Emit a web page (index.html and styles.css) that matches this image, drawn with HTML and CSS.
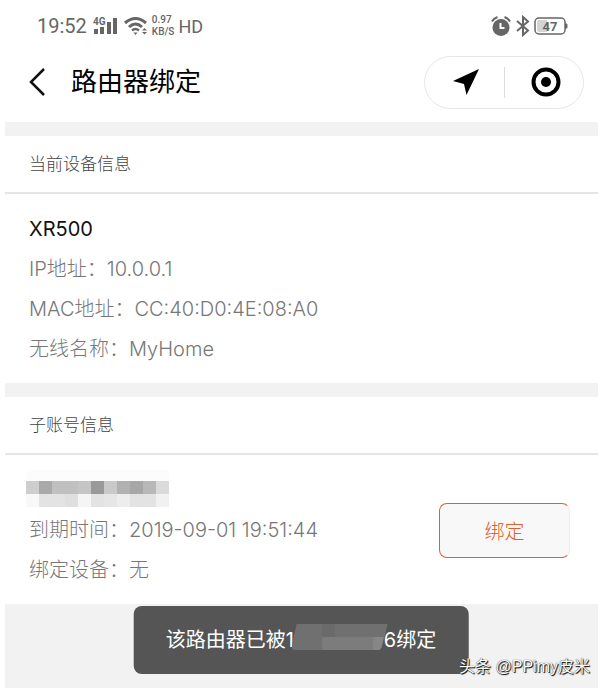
FILE: index.html
```html
<!DOCTYPE html>
<html lang="zh-CN">
<head>
  <meta charset="UTF-8" />
  <meta name="viewport" content="width=device-width, initial-scale=1.0" />
  <title>路由器绑定</title>
  <link rel="stylesheet" href="styles.css">
</head>
<body>
  <!-- 状态栏 -->
  <div class="status">
    <span class="time">19:52</span>
    <svg class="signal" width="25" height="20" viewBox="0 0 25 20" fill="#666">
      <text x="0" y="9" font-size="10" font-weight="700">4G</text>
      <rect x="1" y="13" width="4" height="5"/>
      <rect x="7" y="11" width="4" height="7"/>
      <rect x="14" y="6" width="4" height="12"/>
      <rect x="20" y="2" width="4" height="16"/>
    </svg>
    <svg class="wifi" width="24" height="20" viewBox="0 0 24 20" fill="none" stroke="#666" stroke-width="3">
      <path d="M1 7Q11.500 -2 22 7"/>
      <path d="M5 11Q11.500 5 18 11"/>
      <path d="M8 14.500Q11.500 11.500 15 14.500" stroke-width="2.500"/>
      <path d="M9.500 16.500h4l-2 2.500zM18 14.500l2.500-2.500 2.500 2.500zM18 16l2.500 2.500 2.500-2.500z" fill="#666" stroke="none"/>
    </svg>
    <div class="rate">
      <span>0.97</span>
      <span>KB/S</span>
    </div>
    <span class="hd">HD</span>
    <svg class="alarm" width="20" height="20" viewBox="0 0 20 20" fill="none" stroke="#666">
      <circle cx="10" cy="11.500" r="8.500" fill="#666" stroke="none"/>
      <path d="M1 5.500Q2.500 2.500 6.500 1M13.500 1Q17.500 2.500 19 5.500" stroke-width="2"/>
      <path d="M9.500 7v5h4" stroke="#fff" stroke-width="2"/>
    </svg>
    <svg class="bt" width="14" height="22" viewBox="0 0 14 22" fill="none" stroke="#666" stroke-width="2">
      <path d="M1 6l11 9.500-5 4.500V2l5 4.500L1 16"/>
    </svg>
    <svg class="battery" width="34" height="19" viewBox="0 0 34 19">
      <rect x="1" y="1" width="30" height="16" rx="4" fill="#fff" stroke="#666" stroke-width="1.500"/>
      <path d="M5 3h8v12H5q-2 0-2-2V5q0-2 2-2z" fill="#d4d4d4"/>
      <path d="M31 6.500h1.500q1 0 1 1.500v2q0 1.500-1 1.500H31z" fill="#666"/>
      <text x="16" y="14" font-size="13" font-weight="700" text-anchor="middle" fill="#666">47</text>
    </svg>
  </div>

  <!-- 导航栏 -->
  <header class="nav">
    <button class="back" aria-label="返回">
      <svg width="16" height="28" viewBox="0 0 16 28" fill="none" stroke="#111" stroke-width="2.500">
        <path d="M15 1L2 14l13 13"/>
      </svg>
    </button>
    <h1>路由器绑定</h1>
    <div class="capsule">
      <button aria-label="定位">
        <svg width="28" height="28" viewBox="0 0 28 28"><path d="M27 1L14.500 27 12 16 1 13z" fill="#000"/></svg>
      </button>
      <button aria-label="关闭">
        <svg width="30" height="30" viewBox="0 0 30 30">
          <circle cx="15" cy="15" r="12.500" fill="none" stroke="#000" stroke-width="4"/>
          <circle cx="15" cy="15" r="5" fill="#000"/>
        </svg>
      </button>
    </div>
  </header>

  <main>
    <section>
      <h2>当前设备信息</h2>
      <div class="card">
        <div class="info">
          <p class="name">XR500</p>
          <p>IP地址：10.0.0.1</p>
          <p>MAC地址：CC:40:D0:4E:08:A0</p>
          <p>无线名称：MyHome</p>
        </div>
      </div>
    </section>

    <section>
      <h2>子账号信息</h2>
      <div class="card">
        <div class="info">
          <!-- 账号打码 -->
          <svg class="mosaic" width="143" height="40" viewBox="0 0 143 40" shape-rendering="crispEdges">
            <rect width="143" height="11" fill="#fcfcfc"/>
            <g fill="#c0c0c0">
              <rect y="11" width="143" height="13"/>
              <rect y="11" width="13" height="13" fill="#cecece"/>
              <rect x="13" y="11" width="13" height="13" fill="#a9a9a9"/>
              <rect x="52" y="11" width="13" height="13" fill="#c5c5c5"/>
              <rect x="65" y="11" width="13" height="13" fill="#999"/>
              <rect x="78" y="11" width="13" height="13" fill="#c9c9c9"/>
              <rect x="91" y="11" width="13" height="13" fill="#b1b1b1"/>
              <rect x="104" y="11" width="13" height="13" fill="#a7a7a7"/>
              <rect x="117" y="11" width="13" height="13" fill="#b8b8b8"/>
              <rect x="130" y="11" width="13" height="13" fill="#dadada"/>
            </g>
            <g>
              <rect y="24" width="143" height="13" fill="#e3e3e3"/>
              <rect y="24" width="13" height="13" fill="#f8f8f8"/>
              <rect x="39" y="24" width="13" height="13" fill="#dfdfdf"/>
              <rect x="52" y="24" width="13" height="13" fill="#f5f5f5"/>
              <rect x="78" y="24" width="13" height="13" fill="#e6e6e6"/>
              <rect x="91" y="24" width="13" height="13" fill="#ededed"/>
              <rect x="130" y="24" width="13" height="13" fill="#f1f1f1"/>
            </g>
          </svg>
          <p>到期时间：2019-09-01 19:51:44</p>
          <p>绑定设备：无</p>
        </div>
        <button class="bind">绑定</button>
      </div>
    </section>
  </main>

  <!-- 提示浮层 -->
  <div class="toast" role="status">
    <span>该路由器已被1</span>
    <svg width="96" height="26" viewBox="0 0 98 26" preserveAspectRatio="none">
      <path d="M5 0H98L92 22Q91 26 88 26H3Q0 26 0 22z" fill="#707070"/>
      <path d="M31 13H94L92 22Q91 26 88 26H31z" fill="#7c7c7c"/>
      <path d="M83 13H94L92 22Q91 26 88 26H83z" fill="#868686"/>
      <path d="M31 0H44V13H31z" fill="#6a6a6a"/>
    </svg>
    <span>6绑定</span>
  </div>
  <div class="watermark">头条 @PPimy皮米</div>
</body>
</html>
```
FILE: styles.css
```css
:root {
  --band: #f2f2f2;
  --line: #e5e5e5;
  --text: #777;
  --status: #666;
  --accent: #e2602c;
}

* { box-sizing: border-box; margin: 0; padding: 0; }
body {
  position: relative;
  display: flex;
  flex-direction: column;
  min-height: 100vh;
  padding: 0 4px 0 5px;
  background: #fff;
  color: var(--text);
  font-family: Inter, "Noto Sans CJK SC", sans-serif;
  font-size: 20px;
  font-weight: 300;
}
button {
  font: inherit;
  border: none;
  background: none;
  cursor: pointer;
}
svg { display: block; flex: none; }

/* ====== 状态栏 ====== */
.status {
  display: flex;
  align-items: center;
  height: 52px;
  padding: 0 30px 0 32px;
  color: var(--status);
  font-family: Roboto, sans-serif;
  font-weight: 400;
}
.signal { margin-left: 6px; }
.wifi { margin: 0 4px 0 6px; }
.rate {
  display: grid;
  font-size: 10px;
  font-weight: 500;
  line-height: 12px;
}
.hd { margin-left: 4px; font-size: 18px; }
.alarm { margin-left: auto; }
.bt { margin: 0 4px 0 5px; }

/* ====== 导航栏 ====== */
.nav {
  display: flex;
  align-items: center;
  height: 70px;
  padding: 0 14px 10px 24px;
}
.back { height: 28px; }
h1 {
  margin-left: 26px;
  color: #000;
  font-size: 26px;
  font-weight: 400;
  line-height: 40px;
}
.capsule {
  display: flex;
  width: 160px;
  height: 53px;
  margin-left: auto;
  border: 1px solid #e6e6e6;
  border-radius: 27px;
}
.capsule button {
  display: flex;
  flex: 1;
  align-items: center;
  justify-content: center;
  margin: 10px 0;
  padding-left: 4px;
}
.capsule button + button { border-left: 1px solid #ddd; }

/* ====== 信息区块 ====== */
main { flex: 1; background: var(--band); }
section {
  border-top: 14px solid var(--band);
  background: #fff;
}
h2 {
  padding: 0 24px;
  border-bottom: 2px solid var(--line);
  color: #444;
  font-size: 17px;
  font-weight: 300;
  line-height: 56px;
}
.card {
  display: flex;
  align-items: center;
  justify-content: space-between;
  padding: 15px 28px 14px 24px;
}
.info { line-height: 40px; }
.name { color: #111; font-weight: 400; }
.mosaic { margin-left: -3px; }
.bind {
  width: 131px;
  height: 55px;
  border: 1px solid var(--accent);
  border-right-color: #f8e8e2;
  border-radius: 8px;
  background: #f8f8f8;
  color: var(--accent);
}

/* ====== 提示与水印 ====== */
.toast {
  position: absolute;
  bottom: 14px;
  left: 50%;
  display: flex;
  align-items: center;
  padding: 0 32px;
  border-radius: 8px;
  background: #555;
  color: #fff;
  font-weight: 400;
  line-height: 68px;
  white-space: nowrap;
  transform: translateX(-50%);
}
.toast svg { margin: 0 -4px 6px -2px; }
.watermark {
  position: absolute;
  right: 12px;
  bottom: 8px;
  color: #fff;
  font-family: "Liberation Sans", "Noto Sans CJK SC", sans-serif;
  font-size: 16px;
  font-weight: 400;
  line-height: 26px;
  text-shadow: 1px 1px 1px #000, 0 0 1px #000;
}
```
